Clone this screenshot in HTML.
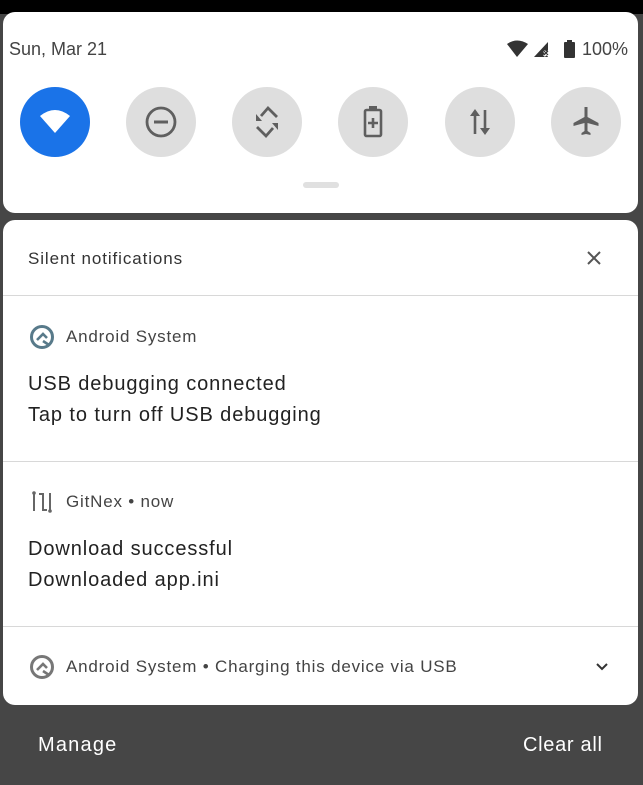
<!DOCTYPE html>
<html><head><meta charset="utf-8"><style>
*{margin:0;padding:0;box-sizing:border-box}
body{width:643px;height:785px;background:#464646;font-family:"Liberation Sans",sans-serif;position:relative;overflow:hidden}
.top{position:absolute;left:0;top:0;width:643px;height:14px;background:#000}
.p1{position:absolute;left:3px;top:12px;width:635px;height:201px;background:#fff;border-radius:12px}
.p2{position:absolute;left:3px;top:220px;width:635px;height:485px;background:#fff;border-radius:12px}
.t{position:absolute;color:#333;white-space:nowrap}
.c{position:absolute;width:70px;height:70px;border-radius:50%;background:#dedede;top:87px}
.c svg{position:absolute;left:17px;top:17px}
.hr{position:absolute;left:3px;width:635px;height:1px;background:#d8d8d8}
.b{font-size:20px;color:#222;letter-spacing:0.9px}
.s{font-size:17px;color:#444;letter-spacing:0.8px}
</style></head><body>
<div class="top"></div>
<div class="p1"></div>
<div class="t" style="left:9px;top:39px;font-size:18px;color:#444">Sun, Mar 21</div>
<svg style="position:absolute;left:506px;top:38px" width="120" height="22" viewBox="0 0 120 22">
<path d="M1 6 Q11 -1 22 6 L11 19 Z" fill="#333"/>
<path d="M28 19 L42 4 V19 Z" fill="#333"/><path d="M38 13 l5 5 m0 -5 l-5 5" stroke="#fff" stroke-width="2.5"/><path d="M38 13 l4 4 m0 -4 l-4 4" stroke="#333" stroke-width="1.2"/>
<rect x="58" y="4" width="11" height="16" rx="1" fill="#333"/><rect x="61" y="2" width="5" height="3" fill="#333"/>
</svg>
<div class="t" style="left:582px;top:39px;font-size:18px;color:#444">100%</div>
<div class="c" style="left:20px;background:#1a73e8"><svg width="36" height="36" viewBox="0 0 36 36"><path d="M3 12 Q18 0 33 12 L18 29 Z" fill="#fff"/></svg></div>
<div class="c" style="left:126px"><svg width="36" height="36" viewBox="0 0 36 36"><circle cx="18" cy="18" r="14" fill="none" stroke="#5f5f5f" stroke-width="2.8"/><rect x="11" y="16.5" width="14" height="3" fill="#5f5f5f"/></svg></div>
<div class="c" style="left:232px"><svg width="36" height="36" viewBox="0 0 36 36"><path d="M12 12 L19 4 L28 13 M24 24 L17 32 L8 23" fill="none" stroke="#5f5f5f" stroke-width="2.8"/><path d="M7 10 L7 17 L13 17Z M29 26 L29 19 L23 19Z" fill="#5f5f5f"/></svg></div>
<div class="c" style="left:338px"><svg width="36" height="36" viewBox="0 0 36 36"><rect x="10" y="6" width="16" height="26" rx="1.5" fill="none" stroke="#5f5f5f" stroke-width="2.6"/><rect x="14" y="2" width="8" height="4" fill="#5f5f5f"/><path d="M18 14v10M13 19h10" stroke="#5f5f5f" stroke-width="2.6"/></svg></div>
<div class="c" style="left:445px"><svg width="36" height="36" viewBox="0 0 36 36"><path d="M13 10v20M23 6v20" stroke="#5f5f5f" stroke-width="2.6"/><path d="M8 12 L13 5 L18 12Z M18 24 L23 31 L28 24Z" fill="#5f5f5f"/></svg></div>
<div class="c" style="left:551px"><svg width="36" height="36" viewBox="0 0 36 36"><path d="M16.5 3 h3 v10 l11 6 v3 l-11 -3 v8 l3 2 v2 l-4.5 -1 l-4.5 1 v-2 l3 -2 v-8 l-11 3 v-3 l11 -6z" fill="#5f5f5f"/></svg></div>
<div style="position:absolute;left:303px;top:182px;width:36px;height:6px;border-radius:3px;background:#e0e0e0"></div>
<div class="p2"></div>
<div class="t" style="left:28px;top:249px;font-size:17px;letter-spacing:0.9px">Silent notifications</div>
<svg style="position:absolute;left:586px;top:250px" width="16" height="16"><path d="M2 2L14 14M14 2L2 14" stroke="#555" stroke-width="2"/></svg>
<div class="hr" style="top:295px"></div>
<svg style="position:absolute;left:28px;top:323px" width="28" height="28" viewBox="0 0 28 28"><circle cx="14" cy="14" r="10.5" fill="none" stroke="#587a8a" stroke-width="3"/><path d="M9 17 L15 11 L19 15 M15 18 L21 22" stroke="#587a8a" stroke-width="2.6" fill="none"/></svg>
<div class="t s" style="left:66px;top:327px">Android System</div>
<div class="t b" style="left:28px;top:373px">USB debugging connected</div>
<div class="t b" style="left:28px;top:404px">Tap to turn off USB debugging</div>
<div class="hr" style="top:461px"></div>
<svg style="position:absolute;left:30px;top:490px" width="24" height="24" viewBox="0 0 24 24"><path d="M4 3v18M9 4h4v16h4M20 3v18" stroke="#666" stroke-width="2" fill="none"/><circle cx="4" cy="3" r="1.8" fill="#666"/><circle cx="20" cy="21" r="1.8" fill="#666"/></svg>
<div class="t s" style="left:66px;top:492px">GitNex • now</div>
<div class="t b" style="left:28px;top:538px">Download successful</div>
<div class="t b" style="left:28px;top:569px">Downloaded app.ini</div>
<div class="hr" style="top:626px"></div>
<svg style="position:absolute;left:28px;top:653px" width="28" height="28" viewBox="0 0 28 28"><circle cx="14" cy="14" r="10.5" fill="none" stroke="#777" stroke-width="3"/><path d="M9 17 L15 11 L19 15 M15 18 L21 22" stroke="#777" stroke-width="2.6" fill="none"/></svg>
<div class="t s" style="left:66px;top:657px">Android System • Charging this device via USB</div>
<svg style="position:absolute;left:595px;top:662px" width="14" height="10"><path d="M2 2L7 7L12 2" stroke="#333" stroke-width="2" fill="none"/></svg>
<div class="t" style="left:38px;top:734px;font-size:20px;color:#fff;letter-spacing:1.2px">Manage</div>
<div class="t" style="left:523px;top:734px;font-size:20px;color:#fff;letter-spacing:0.7px">Clear all</div>
</body></html>
